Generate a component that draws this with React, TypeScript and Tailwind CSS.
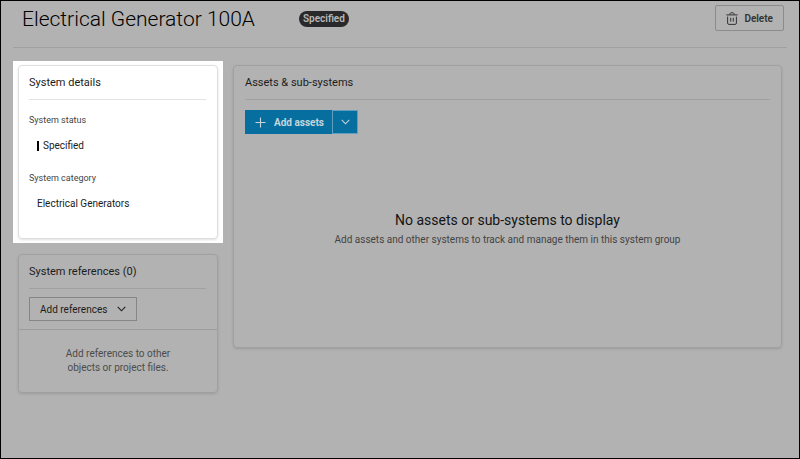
import type { ReactNode } from 'react';

const ChevronIcon = () => (
  <svg width="9" height="6" viewBox="0 0 9 6" fill="none" stroke="currentColor" strokeWidth="1.1" aria-hidden="true">
    <path d="M0.7 0.8 4.5 4.8 8.3 0.8" />
  </svg>
);

const PlusIcon = () => (
  <svg width="11" height="11" viewBox="0 0 11 11" fill="none" stroke="currentColor" strokeWidth="1.1" aria-hidden="true">
    <path d="M5.5 0.5v10M0.5 5.5h10" />
  </svg>
);

const TrashIcon = () => (
  <svg width="12" height="13" viewBox="0 0 12 13" fill="none" stroke="currentColor" strokeWidth="1" aria-hidden="true">
    <path d="M0.3 2.9h11.4M3.7 2.7C3.8 1.2 4.6 0.7 6 0.7s2.2 0.5 2.3 2" />
    <path d="M1.6 4.6v6.5c0 0.8 0.5 1.3 1.3 1.3h6.2c0.8 0 1.3-0.5 1.3-1.3V4.6" />
    <path d="M4.7 5.8v3.8M7.3 5.8v3.8" />
  </svg>
);

const SectionTitle = ({ children, line }: { children: ReactNode; line: string }) => (
  <h2 className={`border-b pb-2 text-[11px] leading-4 ${line}`}>{children}</h2>
);

const App = () => {
  return (
    <div className="min-h-screen border border-black bg-[#b2b2b2] font-[Roboto,sans-serif] text-[#1c1c1c]">
      {/* Header */}
      <header className="mx-3 flex h-[47px] items-start justify-between border-b border-[#a0a0a0] pr-[3px] pl-[9px]">
        <div className="flex items-center gap-11 pt-1">
          <h1 className="text-[21px] leading-7 font-light text-black">Electrical Generator 100A</h1>
          <span className="rounded-full bg-[#29292b] px-1 text-[10px] leading-4 font-semibold text-[#b8b8b8]">Specified</span>
        </div>
        <button
          type="button"
          className="mt-1 flex h-[26px] items-center gap-1.5 rounded-xs border border-[#8c8c8c] px-2.5 text-[10px] font-semibold text-[#333333]"
        >
          <TrashIcon />
          Delete
        </button>
      </header>

      <main className="flex items-start gap-2.5 pt-[13px] pr-[17px] pl-3">
        <aside className="w-[210px] shrink-0">
          {/* System details */}
          <div className="bg-white px-[5px] py-1">
            <section className="h-[174px] rounded-sm border border-[#dedede] pt-[9px] pr-[11px] pl-2.5 shadow-sm">
              <SectionTitle line="border-[#e3e3e3]">System details</SectionTitle>
              <dl>
                <dt className="mt-3 text-[9px] leading-4 text-[#444444]">System status</dt>
                <dd className="mt-2.5 ml-2 flex items-center gap-1 text-[10px] leading-4">
                  <span className="h-2.5 w-0.5 bg-black" />
                  Specified
                </dd>
                <dt className="mt-4 text-[9px] leading-4 text-[#444444]">System category</dt>
                <dd className="mt-2.5 ml-2 text-[10px] leading-4">Electrical Generators</dd>
              </dl>
            </section>
          </div>

          {/* System references */}
          <section className="mx-[5px] mt-[11px] rounded-sm border border-[#a0a0a0] shadow-sm">
            <div className="border-b border-[#9c9c9c] pt-[9px] pr-[11px] pb-2 pl-2.5">
              <SectionTitle line="border-[#a0a0a0]">System references (0)</SectionTitle>
              <button
                type="button"
                className="mt-2 flex h-6 items-center gap-2.5 border border-[#868686] px-2.5 text-[10px] text-[#1c1c1c]"
              >
                Add references
                <ChevronIcon />
              </button>
            </div>
            <p className="px-10 py-[17px] text-center text-[10px] leading-[14px] text-[#4c4c4c]">
              Add references to other objects or project files.
            </p>
          </section>
        </aside>

        {/* Assets */}
        <section className="mt-1 flex h-[283px] min-w-0 grow flex-col rounded-sm border border-[#a0a0a0] px-[11px] pt-[9px] shadow-sm">
          <SectionTitle line="border-[#a0a0a0]">Assets &amp; sub-systems</SectionTitle>
          <div className="mt-2.5 flex h-6 text-[#c4d5de]">
            <button type="button" className="flex items-center gap-2 bg-[#066f9f] pr-2 pl-2.5 text-[10px] font-bold">
              <PlusIcon />
              Add assets
            </button>
            <button
              type="button"
              aria-label="More add options"
              className="flex w-[26px] items-center justify-center border border-[#5f9fc0] bg-[#066f9f]"
            >
              <ChevronIcon />
            </button>
          </div>
          <div className="mt-[76px] text-center">
            <p className="text-[14px] leading-5 text-[#141414]">No assets or sub-systems to display</p>
            <p className="mt-0.5 text-[10px] leading-4 text-[#444444]">
              Add assets and other systems to track and manage them in this system group
            </p>
          </div>
        </section>
      </main>
    </div>
  );
};

export default App;
